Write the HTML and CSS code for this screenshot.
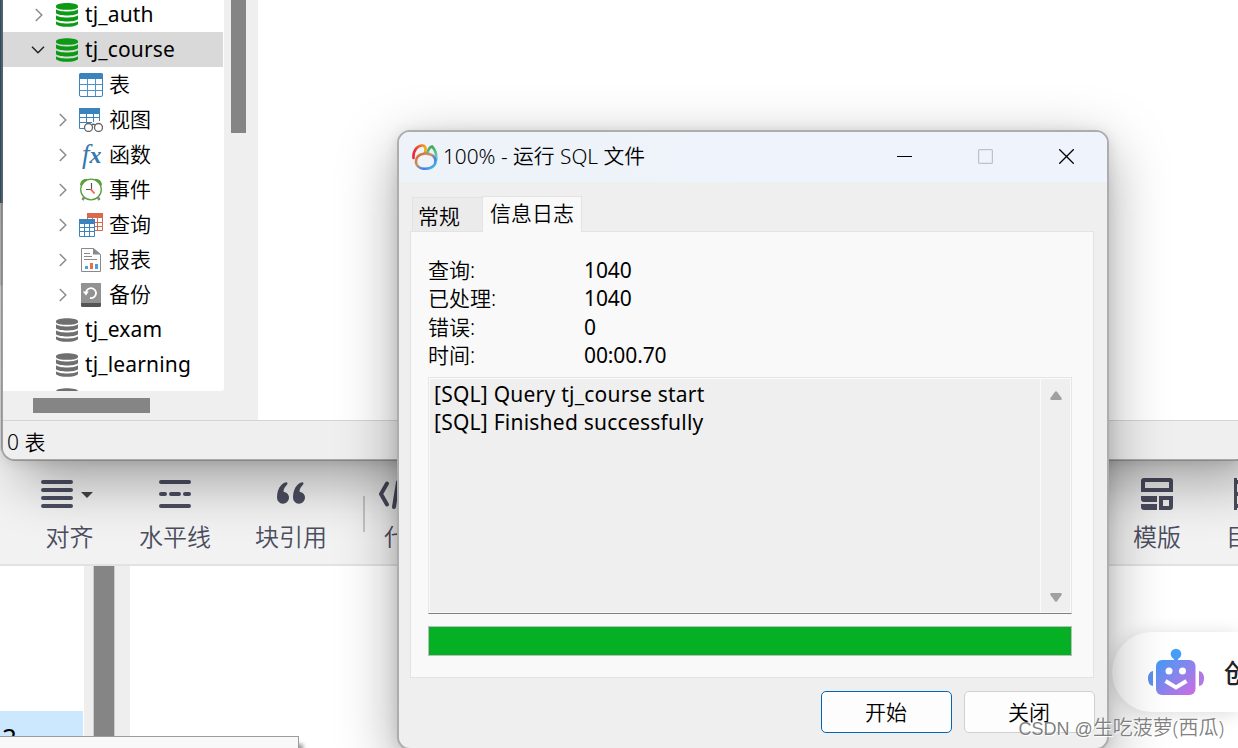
FILE: index.html
```
<!DOCTYPE html>
<html lang="zh-CN">
  <head>
    <meta charset="UTF-8" />
    <meta name="viewport" content="width=device-width, initial-scale=1.0" />
    <title>运行 SQL 文件</title>
    <link rel="stylesheet" href="styles.css">
  </head>
  <body>
    <svg class="defs" width="0" height="0">
      <symbol id="db" viewBox="0 0 22 24">
        <path d="M0 3.2C0-.9 22-.9 22 3.2v1C22 7.600 0 7.600 0 4.200z" />
        <path d="M0 6.200c3 3 19 3 22 0v4c-3 3-19 3-22 0z" />
        <path d="M0 12.200c3 3 19 3 22 0v4c-3 3-19 3-22 0z" />
        <path d="M0 18.200c3 3 19 3 22 0v3c-3 3.400-19 3.400-22 0z" />
      </symbol>
      <symbol id="right" viewBox="0 0 8 14">
        <path d="M.8 1l6 6-6 6" fill="none" stroke="#8c8c8c" stroke-width="1.500" />
      </symbol>
    </svg>

    <!-- editor -->
    <div class="editor">
      <div class="toolbar">
        <div class="tool tool-align">
          <span class="tool-icon">
            <svg width="32" height="32" viewBox="0 0 32 32" stroke="#4b4d60" stroke-width="4" stroke-linecap="round"><path d="M2 4h28M2 12h28M2 20h28M2 28h28" /></svg>
            <i class="caret"></i>
          </span>
          <span>对齐</span>
        </div>
        <div class="tool tool-line">
          <span class="tool-icon">
            <svg width="32" height="32" viewBox="0 0 32 32" stroke="#4b4d60" stroke-width="4" stroke-linecap="round"><path d="M2 4h28M2 16h4M12 16h8M26 16h4M2 28h28" /></svg>
          </span>
          <span>水平线</span>
        </div>
        <div class="tool tool-quote">
          <span class="tool-icon">
            <svg width="32" height="32" viewBox="0 0 32 32" fill="#4b4d60"><path d="M11 4.200C5 6 2 12 2 19.500a6 6 0 1 0 6.600-5.800C8.500 11 9.500 9.500 12 6.800c1-1.500.4-2.800-1-2.600z" /><path d="M27 4.200C21 6 18 12 18 19.500a6 6 0 1 0 6.600-5.800c-.1-2.700.9-4.200 3.400-6.900 1-1.500.4-2.800-1-2.600z" /></svg>
          </span>
          <span>块引用</span>
        </div>
        <i class="tool-sep"></i>
        <div class="tool tool-code">
          <span class="tool-icon">
            <svg width="58" height="32" viewBox="0 0 58 32" fill="none" stroke="#4b4d60" stroke-width="4" stroke-linecap="round"><path d="M8 5.500L2 16l6 10.500M19 4l-4 25M50 5.500L56 16l-6 10.500" /></svg>
          </span>
          <span>代码</span>
        </div>
        <div class="tool tool-tpl">
          <span class="tool-icon">
            <svg width="32" height="32" viewBox="0 0 32 32" fill="#4b4d60"><path fill-rule="evenodd" d="M3 0h26q3 0 3 3v11H0V3q0-3 3-3zM4 4v6h24V4zM0 18h16v6H3q-3 0-3-3zM0 26h16v6H3q-3 0-3-3zM18 18h14v11q0 3-3 3H18zM22 22v6h6v-6z" /></svg>
          </span>
          <span>模版</span>
        </div>
        <div class="tool tool-toc">
          <span class="tool-icon">
            <svg width="32" height="32" viewBox="0 0 32 32" fill="none" stroke="#4b4d60" stroke-width="4"><path d="M1 0v32M1 4h29v24H1M1 16h29" /></svg>
          </span>
          <span>目录</span>
        </div>
      </div>
      <div class="editor-body">
        <div class="outline"><div class="outline-item">2</div></div>
        <div class="editor-scroll"><i></i></div>
      </div>
      <div class="tip"></div>
    </div>

    <div class="backdrop"></div>

    <!-- navicat main window -->
    <div class="main-window">
      <div class="main-body">
        <div class="sidebar">
          <ul class="tree">
            <li class="node"><svg class="arrow"><use href="#right" /></svg><svg class="db on"><use href="#db" /></svg>tj_auth</li>
            <li class="node selected"><svg class="arrow-down" viewBox="0 0 14 8"><path d="M1 .8l6 6 6-6" fill="none" stroke="#222" stroke-width="1.500" /></svg><svg class="db on"><use href="#db" /></svg>tj_course</li>
            <li class="node child">
              <i class="arrow"></i>
              <svg class="icon" viewBox="0 0 24 24"><rect x=".5" y=".5" width="23" height="23" rx="1.500" fill="#fff" stroke="#3b83bd" /><path d="M0 6V2q0-2 2-2h20q2 0 2 2v4z" fill="#3b83bd" /><path d="M8.500 6v17M16.500 6v17M1 11.500h22M1 17.500h22" stroke="#4d95cd" /></svg>表
            </li>
            <li class="node child">
              <svg class="arrow"><use href="#right" /></svg>
              <svg class="icon" viewBox="0 0 24 24"><path d="M.5 5v15.500H5M20.500 5v8M7.500 5v10M14.500 5v9M1 9.500h20M1 14.500h12" fill="none" stroke="#3b83bd" /><path d="M0 0h21v6H0z" fill="#3b83bd" /><g fill="#fff" stroke="#666" stroke-width="1.300"><circle cx="9.500" cy="19.500" r="4" /><circle cx="19.500" cy="19.500" r="4" /><path d="M12.500 17q2-1.500 4 0" fill="none" /></g></svg>视图
            </li>
            <li class="node child">
              <svg class="arrow"><use href="#right" /></svg>
              <span class="icon fx">f<b>x</b></span>函数
            </li>
            <li class="node child">
              <svg class="arrow"><use href="#right" /></svg>
              <svg class="icon" viewBox="0 0 24 24"><path d="M5 19.500l-1.500 2.500M19 19.500l1.500 2.500" stroke="#888" stroke-width="2.500" /><path d="M1 6.500Q2 1 7.500.8L9 2 2 8zM23 6.500Q22 1 16.500.8L15 2l7 6z" fill="#5a9e3a" /><circle cx="12" cy="11.500" r="10.300" fill="#fff" stroke="#5a9e3a" stroke-width="1.300" /><path d="M12.500 5v6.500H7" stroke="#555" stroke-width="1.200" fill="none" /><path d="M11.500 11l4 4.500" stroke="#f0604d" stroke-width="1.800" /></svg>事件
            </li>
            <li class="node child">
              <svg class="arrow"><use href="#right" /></svg>
              <svg class="icon" viewBox="0 0 24 24"><path d="M8.500.5h15v17h-15zM18.500 5v12M13.500 5v12M9 9.500h14M9 13.500h14" fill="#fff" stroke="#d9694a" /><path d="M8 0h16v5H8z" fill="#d9694a" /><path d="M.5 6.500h15v17H.5zM5.500 11v12M10.500 11v12M1 14.500h14M1 18.500h14" fill="#fff" stroke="#3b83bd" /><path d="M0 6h16v5H0z" fill="#3b83bd" /></svg>查询
            </li>
            <li class="node child">
              <svg class="arrow"><use href="#right" /></svg>
              <svg class="icon" viewBox="0 0 24 24"><path d="M2.500.5h12l7 6v17h-19z" fill="#fff" stroke="#8a8a8a" /><path d="M14 0v6.500h8z" fill="#8a8a8a" /><path d="M5 5.500h6M5 8.500h8M5 11.500h13" stroke="#8a8a8a" /><path d="M6 18h3v3H6zM16 16h3v5h-3z" fill="#4d9fe0" /><path d="M11 15h3v6h-3z" fill="#ef6c4b" /></svg>报表
            </li>
            <li class="node child">
              <svg class="arrow"><use href="#right" /></svg>
              <svg class="icon" viewBox="0 0 24 24"><rect x="2" width="20" height="24" rx="1.500" fill="#555" /><path d="M2 20V1.500Q2 0 3.500 0h17Q22 0 22 1.500V20z" fill="#929292" /><path d="M7 10a5 5 0 1 1 4 5" fill="none" stroke="#fff" stroke-width="1.800" /><path d="M3.800 8.500h6L7 12.500z" fill="#fff" /></svg>备份
            </li>
            <li class="node"><i class="arrow"></i><svg class="db"><use href="#db" /></svg>tj_exam</li>
            <li class="node"><i class="arrow"></i><svg class="db"><use href="#db" /></svg>tj_learning</li>
            <li class="node"><i class="arrow"></i><svg class="db"><use href="#db" /></svg></li>
          </ul>
          <div class="vscroll"><i></i></div>
          <div class="hscroll"><i></i></div>
        </div>
      </div>
      <div class="statusbar">0 表</div>
    </div>

    <div class="assistant">
      <svg width="56" height="48" viewBox="0 0 56 48">
        <defs>
          <linearGradient id="bot" x1="0" y1="0" x2="1" y2="1"><stop offset="0" stop-color="#3f9cf7" /><stop offset=".5" stop-color="#8a84ec" /><stop offset="1" stop-color="#cf6ae2" /></linearGradient>
        </defs>
        <circle cx="28" cy="6" r="5.300" fill="#459ef8" />
        <path d="M26 10h4v4h-4z" fill="#4f98f6" />
        <rect x="8" y="12" width="39.500" height="35" rx="6" fill="url(#bot)" />
        <path d="M5 23v15q-5-1-5-7.500T5 23z" fill="#5b90ee" />
        <path d="M51 23v15q5-1 5-7.500T51 23z" fill="#b078e6" />
        <circle cx="21" cy="23" r="3.500" fill="#fff" /><circle cx="34.500" cy="23" r="3.500" fill="#fff" />
        <path d="M17.500 33l10.500 6.500L38.500 33" fill="none" stroke="#fff" stroke-width="4" />
      </svg>
      <span>创</span>
    </div>

    <!-- run sql dialog -->
    <div class="dialog">
      <div class="titlebar">
        <svg class="logo" viewBox="0 0 26 26" fill="none" stroke-width="2.600" stroke-linecap="round">
          <defs>
            <linearGradient id="lg1"><stop offset="0" stop-color="#e8243c" /><stop offset="1" stop-color="#f5a81c" /></linearGradient>
            <linearGradient id="lg2" x1="0" y1="0" x2="1" y2="1"><stop offset="0" stop-color="#d8651f" /><stop offset=".4" stop-color="#c7946a" /><stop offset=".7" stop-color="#3f7df0" /><stop offset="1" stop-color="#55d0d8" /></linearGradient>
            <linearGradient id="lg3" x1="0" y1="0" x2="0" y2="1"><stop offset="0" stop-color="#43a95a" /><stop offset="1" stop-color="#6fdcd8" /></linearGradient>
          </defs>
          <path d="M1.500 14C1 6 6 1.300 10.500 1.500c3.500.3 3.500 4 2.500 7.500" stroke="url(#lg1)" />
          <path d="M15.500 9c.5-3 2-5.500 4.500-6.500 2.500 2.500 4.800 7 4.300 13.500" stroke="url(#lg3)" />
          <path d="M4 17.500c0-4 3-7 6.500-7.500 1.500-.3 2-.8 3.500-.5 2 .5 3 .4 4.500 1 3 1 5 3.500 5 7 0 4-4 7.300-10 7.300S4 22 4 17.500z" stroke="url(#lg2)" />
        </svg>
        <span class="title">100% - 运行 SQL 文件</span>
        <div class="win-buttons">
          <svg width="15" height="15" viewBox="0 0 15 15"><path d="M0 7.500h15" stroke="#000" /></svg>
          <svg width="15" height="15" viewBox="0 0 15 15"><rect x=".6" y=".6" width="13.800" height="13.800" rx="1" fill="none" stroke="#bfc1c6" stroke-width="1.200" /></svg>
          <svg width="15" height="15" viewBox="0 0 15 15"><path d="M.3.3l14.400 14.400M14.700.3L.3 14.700" stroke="#000" stroke-width="1.300" /></svg>
        </div>
      </div>
      <div class="tabs">
        <div class="tab">常规</div>
        <div class="tab active">信息日志</div>
      </div>
      <div class="panel">
        <dl class="stats">
          <dt>查询:</dt><dd>1040</dd>
          <dt>已处理:</dt><dd>1040</dd>
          <dt>错误:</dt><dd>0</dd>
          <dt>时间:</dt><dd>00:00.70</dd>
        </dl>
        <div class="log">
          <div class="log-text">
            <p>[SQL] Query tj_course start</p>
            <p>[SQL] Finished successfully</p>
          </div>
          <div class="log-scroll">
            <svg width="12" height="9" viewBox="0 0 12 9"><path d="M5 .8q1-1 2 0l4.600 6.200q.6 2-1 2H1.400q-1.600 0-1-2z" fill="#a0a0a0" /></svg>
            <svg width="12" height="9" viewBox="0 0 12 9"><path d="M5 8.200q1 1 2 0L11.600 2q.6-2-1-2H1.400Q-.2 0 .4 2z" fill="#a0a0a0" /></svg>
          </div>
        </div>
        <div class="progress"></div>
      </div>
      <div class="actions">
        <button class="btn primary">开始</button>
        <button class="btn">关闭</button>
      </div>
    </div>

    <div class="watermark"><span>CSDN @</span>生吃菠萝(西瓜)</div>
  </body>
</html>
```
FILE: styles.css
```
* {
  margin: 0;
  padding: 0;
  box-sizing: border-box;
}
body {
  position: relative;
  width: 1238px;
  height: 748px;
  overflow: hidden;
  background: #fff;
  color: #000;
  font: 21px/28px "Noto Sans", "Noto Sans CJK SC", sans-serif;
}
svg {
  display: block;
  flex: none;
}
.defs {
  position: absolute;
}

/* editor behind the windows */
.editor {
  position: absolute;
  left: 0;
  top: 450px;
  width: 1238px;
  height: 298px;
  overflow: hidden;
  display: flex;
  flex-direction: column;
}
.toolbar {
  display: flex;
  flex: none;
  width: 1296px;
  height: 116px;
  padding: 28px 0 0 11px;
  background: #f2f2f2;
  border-bottom: 2px solid #e2e2e2;
  color: #4b4d60;
  font-size: 24px;
  font-weight: 350;
}
.tool {
  display: flex;
  flex-direction: column;
  align-items: center;
  white-space: nowrap;
  line-height: 32px;
  gap: 11px;
}
.tool-icon {
  display: flex;
  align-items: center;
  height: 32px;
}
.tool-align { width: 117px; }
.tool-align .tool-icon { margin-right: 10px; }
.tool-line { width: 94px; }
.tool-quote { width: 138px; }
.tool-code { width: 84px; margin-left: 1px; }
.tool-tpl { width: 94px; margin-left: auto; }
.tool-toc { width: 92px; }
.caret {
  margin: 2px -5px 0 8px;
  border: 6px solid transparent;
  border-top-color: #444;
  border-bottom: 0;
}
.tool-sep {
  width: 2px;
  height: 36px;
  margin: 18px 0 0 3px;
  background: #c6c6c6;
}
.editor-body {
  display: flex;
  flex: 1;
}
.outline {
  width: 84px;
  padding-top: 145px;
}
.outline-item {
  width: 83px;
  height: 60px;
  padding: 12px 0 0 2px;
  background: #cce8ff;
  font-size: 26px;
}
.editor-scroll {
  width: 46px;
  padding-left: 9px;
  background: #eee;
}
.editor-scroll i {
  display: block;
  width: 22px;
  height: 100%;
  background: #858585;
  border: solid #ccc;
  border-width: 0 1px;
}
.tip {
  position: absolute;
  left: -2px;
  top: 286px;
  width: 301px;
  height: 30px;
  background: #f8f8f8;
  border: 1px solid #9c9c9c;
  box-shadow: 4px 8px 4px rgba(0, 0, 0, .4);
}

.backdrop {
  position: absolute;
  left: 0;
  top: 0;
  width: 30px;
  height: 450px;
  background: linear-gradient(#35566e 203px, #bbb 203px, #c4c4c4 285px, #ddd 286px, #e4e4e4);
}

/* main window */
.main-window {
  position: absolute;
  left: 1px;
  top: -10px;
  width: 1237px;
  height: 471px;
  padding-top: 8px;
  display: flex;
  flex-direction: column;
  overflow: hidden;
  background: #fff;
  background-clip: padding-box;
  border: 2px solid rgba(110, 110, 110, .55);
  border-right: 0;
  border-radius: 0 0 0 14px;
  box-shadow: 20px 22px 54px rgba(0, 0, 0, .32), 0 2px 14px rgba(0, 0, 0, .1);
}
.main-body {
  flex: 1;
  min-height: 0;
}
.sidebar {
  display: grid;
  grid-template: 391px 29px / 221px 34px;
  width: 255px;
  background: #efefef;
}
.tree {
  height: 391px;
  overflow: hidden;
  background: #fff;
  list-style: none;
  border-bottom-right-radius: 3px;
}
.node {
  display: flex;
  align-items: center;
  height: 35px;
  padding: 0 0 1px 32px;
  letter-spacing: .15px;
}
.node svg {
  margin-top: 2px;
}
.node:first-child {
  margin-top: -3px;
}
.node.selected {
  width: 220px;
  padding-left: 28px;
  background: #d9d9d9;
}
.node.child {
  padding-left: 56px;
  font-weight: 350;
  letter-spacing: 0;
}
.arrow {
  flex: none;
  width: 8px;
  height: 14px;
  margin-right: 13px;
}
.arrow-down {
  width: 14px;
  height: 8px;
  margin-right: 11px;
}
.node.child .arrow {
  margin-right: 12px;
}
.db {
  width: 22px;
  height: 24px;
  margin-right: 7px;
  fill: #6f6f6f;
}
.db.on {
  fill: #0c9a14;
}
.icon {
  width: 24px;
  height: 24px;
  margin-right: 6px;
}
.fx {
  color: #3679ae;
  font: italic 27px/24px "Liberation Serif", serif;
  white-space: nowrap;
  padding-left: 3px;
}
.fx b {
  font-size: 24px;
}
.vscroll {
  padding-left: 7px;
}
.vscroll i {
  display: block;
  width: 15px;
  height: 133px;
  background: #858585;
}
.hscroll {
  padding: 7px 0 0 30px;
}
.hscroll i {
  display: block;
  width: 117px;
  height: 15px;
  background: #858585;
}
.statusbar {
  height: 39px;
  padding: 7px 4px 0;
  background: #efefef;
  border-top: 1px solid #d4d4d4;
  font-weight: 350;
}

.assistant {
  position: absolute;
  left: 1112px;
  top: 632px;
  width: 126px;
  height: 80px;
  padding-left: 36px;
  display: flex;
  align-items: center;
  gap: 20px;
  background: #fff;
  border-radius: 40px 0 0 40px;
  box-shadow: 0 2px 18px rgba(0, 0, 0, .14);
  color: #222226;
  font-size: 26px;
  font-weight: 500;
  white-space: nowrap;
}
.assistant span {
  padding-top: 2px;
}

/* dialog */
.dialog {
  position: absolute;
  left: 397px;
  top: 130px;
  width: 712px;
  height: 620px;
  display: flex;
  flex-direction: column;
  background: #efefef;
  background-clip: padding-box;
  border: 2px solid #adadad;
  border-radius: 13px;
  box-shadow: 0 18px 58px rgba(0, 0, 0, .34), 0 2px 14px rgba(0, 0, 0, .1);
  font-weight: 350;
}
.titlebar {
  display: flex;
  align-items: center;
  height: 50px;
  flex: none;
  padding: 0 33px 1px 13px;
  background: linear-gradient(90deg, #edf3f8, #eff3fb 50%);
  border-radius: 11px 11px 0 0;
  font-size: 20.800px;
}
.logo {
  width: 26px;
  height: 26px;
}
.title {
  margin-left: 5px;
  padding-bottom: 2px;
}
.win-buttons {
  display: flex;
  gap: 66px;
  margin-left: auto;
}
.tabs {
  display: flex;
  align-items: flex-end;
  height: 50px;
  flex: none;
  padding-left: 13px;
  position: relative;
  z-index: 1;
  margin-bottom: -1px;
}
.tab {
  width: 70px;
  height: 34px;
  margin-bottom: 1px;
  padding: 4px 0 0 5px;
  background: #ebebeb;
  border: 1px solid #e3e3e3;
  border-width: 1px 0 0 1px;
}
.tab.active {
  width: 100px;
  height: 36px;
  margin-bottom: 0;
  padding: 2px 0 0 7px;
  background: #f9f9f9;
  border-width: 1px 1px 0;
}
.panel {
  width: 684px;
  height: 447px;
  flex: none;
  margin-left: 11px;
  padding: 24px 21px 0 17px;
  background: #f9f9f9;
  border: 1px solid #e3e3e3;
}
.stats {
  display: grid;
  grid-template-columns: 156px 1fr;
  height: 121px;
  align-content: start;
  grid-auto-rows: 28.400px;
}
.stats dd {
  font-weight: 400;
  letter-spacing: -.1px;
}
.log {
  display: flex;
  height: 237px;
  border: 1px solid #e6e6e6;
  border-bottom-color: #808080;
  background: #efefef;
  box-shadow: inset 0 0 0 1px #fafafa;
}
.log-text {
  flex: 1;
  padding: 2px 5px;
  font-weight: 400;
  letter-spacing: .24px;
}
.log-scroll {
  display: flex;
  flex-direction: column;
  justify-content: space-between;
  align-items: center;
  width: 31px;
  padding: 13px 1px 11px 0;
  border-left: 1px solid #fafafa;
}
.progress {
  height: 30px;
  margin-top: 12px;
  background: #06b025;
  border: 1px solid #bcbcbc;
}
.actions {
  display: flex;
  justify-content: flex-end;
  gap: 12px;
  padding: 13px 12px 0 0;
}
.btn {
  width: 131px;
  height: 42px;
  padding: 0 1px 1px 0;
  background: #fdfdfd;
  border: 1px solid #d0d0d0;
  border-radius: 5px;
  color: #000;
  font: inherit;
}
.btn.primary {
  border-color: #0067b8;
}

.watermark {
  position: absolute;
  right: 14px;
  top: 714px;
  color: rgba(120, 120, 120, .95);
  font-size: 20px;
  font-weight: 350;
  text-shadow: 1px 1px 1px #fff;
  white-space: nowrap;
}
.watermark span {
  font: 18px "Liberation Sans", sans-serif;
}
```
